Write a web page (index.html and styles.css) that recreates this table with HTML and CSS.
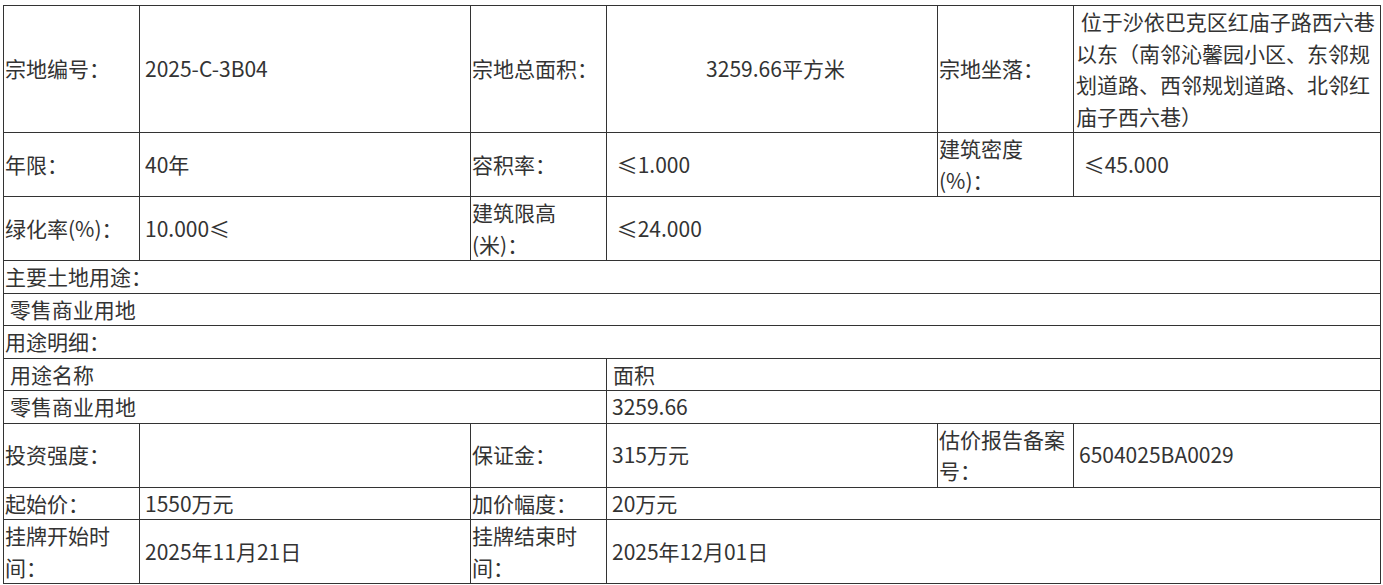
FILE: index.html
```html
<!DOCTYPE html>
<html lang="zh-CN">
<head>
<meta charset="utf-8">
<title>宗地信息</title>
<link rel="stylesheet" href="styles.css">
</head>
<body>
<div class="page">
<table class="land">
  <colgroup>
    <col class="c-label"><col class="c-value"><col class="c-label"><col class="c-value"><col class="c-label"><col class="c-last">
  </colgroup>
  <tbody>
    <tr>
      <td class="lbl">宗地编号：</td>
      <td class="val">2025-C-3B04</td>
      <td class="lbl">宗地总面积：</td>
      <td class="val center">3259.66平方米</td>
      <td class="lbl">宗地坐落：</td>
      <td class="addr"> 位于沙依巴克区红庙子路西六巷以东（南邻沁馨园小区、东邻规划道路、西邻规划道路、北邻红庙子西六巷）</td>
    </tr>
    <tr>
      <td class="lbl">年限：</td>
      <td class="val">40年</td>
      <td class="lbl">容积率：</td>
      <td class="val"> ≤1.000</td>
      <td class="lbl">建筑密度(%)：</td>
      <td class="val"> ≤45.000</td>
    </tr>
    <tr>
      <td class="lbl">绿化率(%)：</td>
      <td class="val">10.000≤</td>
      <td class="lbl">建筑限高(米)：</td>
      <td class="val" colspan="3"> ≤24.000</td>
    </tr>
    <tr>
      <td class="lbl" colspan="6">主要土地用途：</td>
    </tr>
    <tr>
      <td class="lbl" colspan="6"> 零售商业用地</td>
    </tr>
    <tr>
      <td class="lbl" colspan="6">用途明细：</td>
    </tr>
    <tr>
      <td class="sub" colspan="3">用途名称</td>
      <td class="sub" colspan="3">面积</td>
    </tr>
    <tr>
      <td class="sub" colspan="3">零售商业用地</td>
      <td class="val" colspan="3">3259.66</td>
    </tr>
    <tr>
      <td class="lbl">投资强度：</td>
      <td class="val"></td>
      <td class="lbl">保证金：</td>
      <td class="val">315万元</td>
      <td class="lbl">估价报告备案号：</td>
      <td class="val">6504025BA0029</td>
    </tr>
    <tr>
      <td class="lbl">起始价：</td>
      <td class="val">1550万元</td>
      <td class="lbl">加价幅度：</td>
      <td class="val" colspan="3">20万元</td>
    </tr>
    <tr>
      <td class="lbl">挂牌开始时间：</td>
      <td class="val">2025年11月21日</td>
      <td class="lbl">挂牌结束时间：</td>
      <td class="val" colspan="3">2025年12月01日</td>
    </tr>
  </tbody>
</table>
</div>
</body>
</html>
```
FILE: styles.css
```css
html, body {
  margin: 0;
  padding: 0;
  background: #ffffff;
}

.page {
  padding: 5px 0 0 3px;
}

.land {
  width: 1377px;
  table-layout: fixed;
  border-collapse: collapse;
  font-family: "Noto Sans CJK SC", "Noto Sans", sans-serif;
  font-size: 21px;
  line-height: 31.5px;
  color: #333333;
}

.c-label { width: 136px; }
.c-value { width: 331px; }
.c-last { width: 307px; }

.land td {
  border: 1px solid #333333;
  padding: 0 1px;
  vertical-align: middle;
  white-space: pre-wrap;
  text-align: left;
}

.land td.val {
  padding: 0 5px;
}

.land td.center {
  text-align: center;
  padding: 0 2px 0 9px;
}

.land td.addr {
  padding: 0 2px;
}

.land td.sub {
  padding: 0 6px;
}
```
